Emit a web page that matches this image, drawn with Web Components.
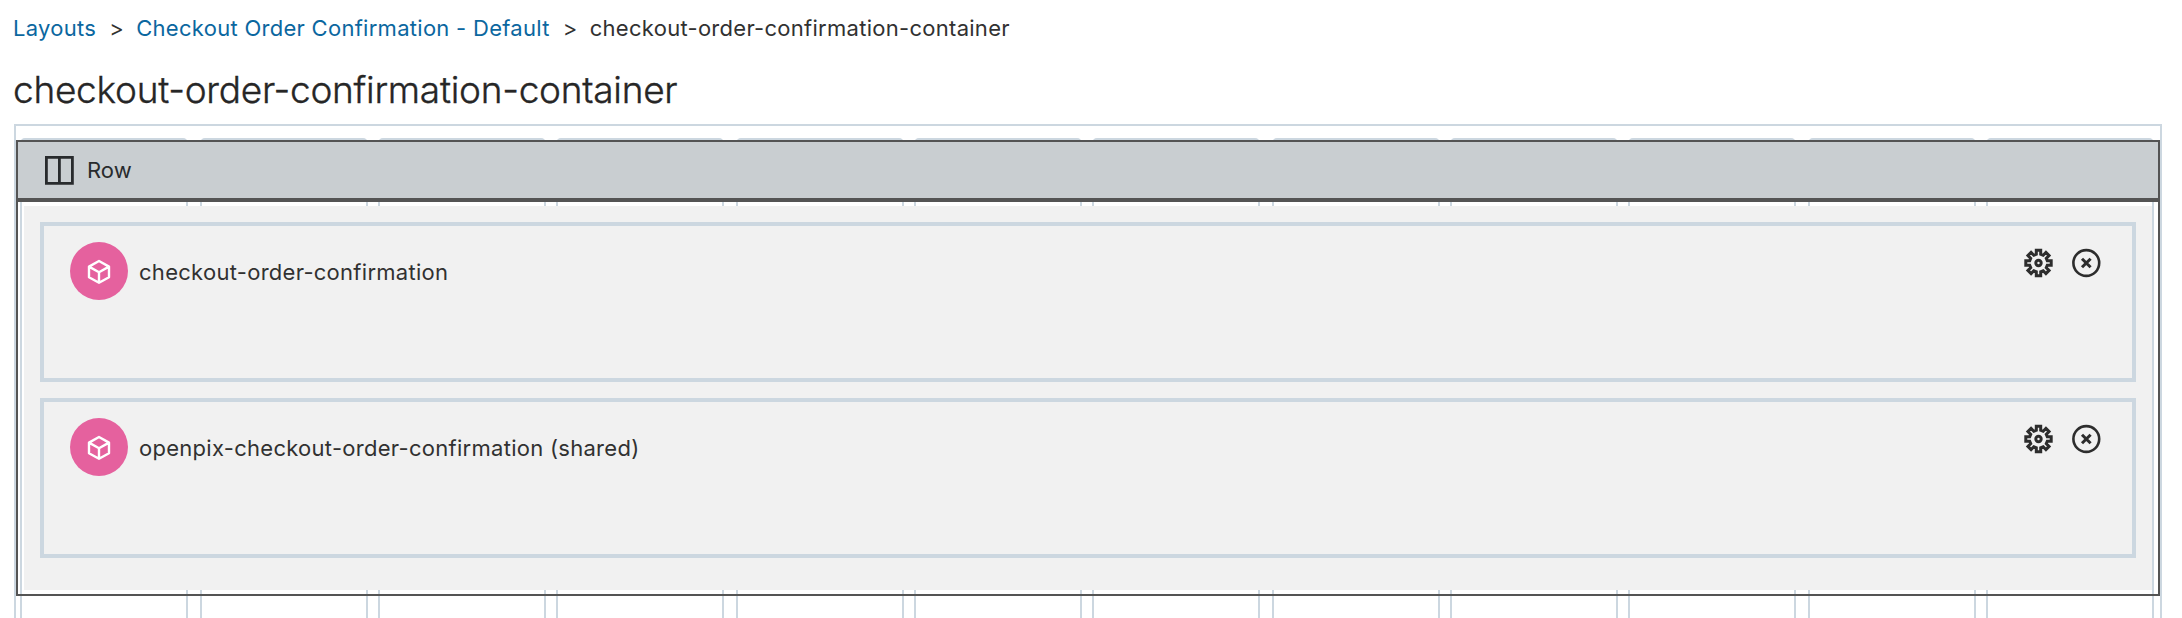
<!DOCTYPE html>
<html lang="en">
<head>
<meta charset="utf-8">
<title>checkout-order-confirmation-container</title>
<style>
html,body{margin:0;height:618px;overflow:hidden;background:#fff}
body{font-family:Inter,"Liberation Sans",sans-serif;color:#313131}
</style>
</head>
<body>
<layout-page></layout-page>
<script>
const define = (name, html) => customElements.define(name, class extends HTMLElement {
  connectedCallback() {
    if (this.shadowRoot) return;
    const t = document.createElement('template');
    t.innerHTML = html;
    this.attachShadow({mode: 'open'}).append(t.content.cloneNode(true));
  }
});

define('crumb-trail', `
<style>
:host{display:flex;align-items:center;height:28px;font-size:22px;line-height:28px;letter-spacing:.28px;white-space:nowrap}
a{color:#0b679f;text-decoration:none}
.sep{margin:0 12.5px 0 13px;letter-spacing:0}
</style>
<a>Layouts</a><span class="sep">&gt;</span><a>Checkout Order Confirmation - Default</a><span class="sep">&gt;</span><span>checkout-order-confirmation-container</span>`);

define('column-guides', `
<style>
:host{display:flex;gap:10px;height:600px}
i{box-sizing:border-box;width:168px;flex:none;border:2px solid #ccd7e0;border-radius:5px}
i:nth-of-type(3n+2){margin-left:2px}
</style>${'<i></i>'.repeat(12)}`);

define('widget-card', `
<style>
:host{box-sizing:border-box;display:flex;align-items:flex-start;height:160px;border:4px solid #ccd7e0;padding:16px 31px 0 26px;font-size:22px;letter-spacing:.28px}
.badge{width:58px;height:58px;border-radius:50%;background:#e5619e;flex:none}
.name{margin-left:11px;line-height:58px;padding-top:1px;flex:1}
.tools{display:flex;gap:18px;padding-top:6px}
svg{display:block}
</style>
<svg class="badge" viewBox="0 0 58 58" fill="none" stroke="#fff" stroke-width="2.4" stroke-linejoin="round"><path d="M29 19 39 24.6V35.2L29 40.8 19 35.2V24.6ZM19 24.6 29 30.2 39 24.6M29 30.2V40.8"/></svg>
<div class="name"><slot></slot></div>
<div class="tools">
<svg width="30" height="30" viewBox="-15.5 -15 30 30" fill="none" stroke="#2d2d2d" stroke-width="3"><path class="gear"/><circle r="2.7"/></svg>
<svg width="30" height="30" viewBox="-15.3 -15 30 30" fill="none" stroke="#2d2d2d" stroke-width="2.6"><circle r="12.9"/><path stroke-width="3" d="M-4.3-4.3 4.3 4.3M4.3-4.3-4.3 4.3"/></svg>
</div>`);

define('layout-row', `
<style>
:host{box-sizing:border-box;display:block;height:456px;border:2px solid #545454}
header{display:flex;align-items:center;height:56px;background:#c9ced1;border-bottom:4px solid #545454;font-size:22px;color:#282b2d;padding-left:27px}
svg{display:block}
span{margin-left:13px}
main{box-sizing:border-box;height:384px;margin:4px 6px;padding:16px;background:#f1f1f1;display:flex;flex-direction:column;gap:16px}
</style>
<header><svg width="29" height="29" viewBox="0 0 29 29" fill="none" stroke="#282b2d" stroke-width="2.8"><path d="M1.4 1.4H27.4V27.4H1.4ZM14.4 1.4V27.4"/></svg><span>Row</span></header>
<main><slot></slot></main>`);

define('layout-page', `
<style>
:host{display:block;height:618px;overflow:hidden;padding:0 20px 0 14px;box-sizing:border-box}
crumb-trail{padding-top:14px;margin-left:-1px}
h1{margin:23px 0 0 -1px;height:50px;line-height:50px;font-size:37px;font-weight:300;letter-spacing:-.27px;color:#262626;-webkit-text-stroke:.35px #262626}
.canvas{box-sizing:border-box;margin-top:9px;height:520px;border:2px solid #ccd7e0;display:grid}
column-guides,layout-row{grid-area:1/1}
column-guides{margin:12px 0 0 4px}
layout-row{margin:14px 0 0}
</style>
<crumb-trail></crumb-trail>
<h1>checkout-order-confirmation-container</h1>
<div class="canvas">
<column-guides></column-guides>
<layout-row>
<widget-card>checkout-order-confirmation</widget-card>
<widget-card>openpix-checkout-order-confirmation (shared)</widget-card>
</layout-row>
</div>`);

// Eight square teeth around the hub.
const gearPath = (() => {
  const pts = [];
  for (let k = 0; k < 8; k++) {
    const a = k * Math.PI / 4, c = Math.cos(a), s = Math.sin(a);
    for (const [x, y] of [[-2.2,-8.8],[-2.2,-12.7],[2.2,-12.7],[2.2,-8.8]])
      pts.push((x*c - y*s).toFixed(2) + ' ' + (x*s + y*c).toFixed(2));
  }
  return 'M' + pts.join('L') + 'Z';
})();
document.querySelector('layout-page').shadowRoot.querySelectorAll('widget-card')
  .forEach(w => w.shadowRoot.querySelector('.gear').setAttribute('d', gearPath));
</script>
</body>
</html>
